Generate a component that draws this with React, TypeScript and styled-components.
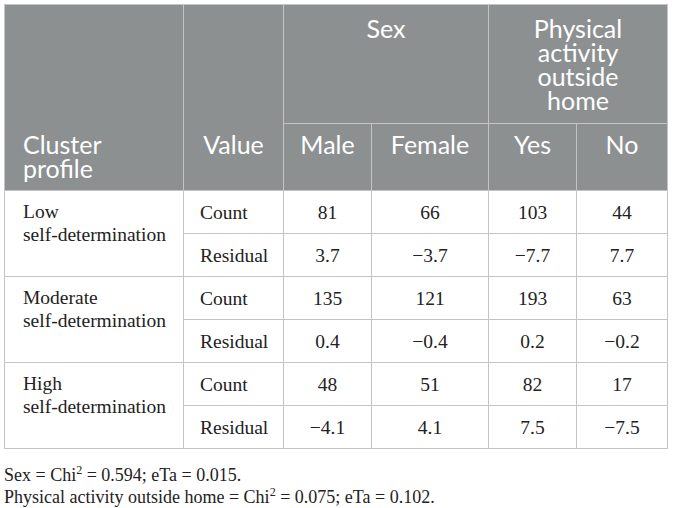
import { Fragment } from 'react';
import styled, { createGlobalStyle } from 'styled-components';

const GlobalStyle = createGlobalStyle`
  body {
    margin: 4px;
    background: #fff;
  }
`;

const Table = styled.table`
  width: 663px;
  border-collapse: collapse;
  table-layout: fixed;
  border: 1px solid #c4c4c4;
`;

const HeadCell = styled.th<{ $align?: 'left' | 'center'; $valign?: 'top' | 'bottom'; $pb?: number }>`
  background: #8c9091;
  color: #fff;
  font-family: Lato, "Open Sans", sans-serif;
  font-weight: 400;
  font-size: 25px;
  line-height: 24px;
  text-align: ${({ $align }) => $align || 'center'};
  vertical-align: ${({ $valign }) => $valign || 'top'};
  border: 1px solid #c4c4c4;
  padding: ${({ $valign, $pb }) => ($valign === 'bottom' ? `0 6px ${$pb ?? 10}px` : '11px 6px 0')};
  padding-left: ${({ $align }) => ($align === 'left' ? '18px' : '6px')};
`;

const SubHeadCell = styled(HeadCell)`
  padding-top: 8px;
`;

const TopRow = styled.tr`
  height: 119px;
`;

const SubRow = styled.tr`
  height: 67px;
`;

const BodyRow = styled.tr`
  height: 43px;
`;

const Cell = styled.td<{ $align?: 'left' | 'center' }>`
  font-family: "Liberation Serif", "Times New Roman", serif;
  font-size: 19.5px;
  line-height: 23px;
  color: #222;
  border: 1px solid #c4c4c4;
  text-align: ${({ $align }) => $align || 'center'};
  vertical-align: middle;
  padding: ${({ $align }) => ($align === 'left' ? '0 6px 0 16px' : '0 6px')};
`;

const GroupCell = styled(Cell)`
  vertical-align: top;
  text-align: left;
  padding: 9px 6px 0 18px;
`;

const Notes = styled.div`
  margin-top: 15px;
  font-family: "Liberation Serif", "Times New Roman", serif;
  font-size: 18px;
  line-height: 22px;
  color: #222;
`;

const Sup = styled.sup`
  font-size: 12px;
  line-height: 0;
`;

const groups = [
  { name: 'Low', count: ['81', '66', '103', '44'], residual: ['3.7', '−3.7', '−7.7', '7.7'] },
  { name: 'Moderate', count: ['135', '121', '193', '63'], residual: ['0.4', '−0.4', '0.2', '−0.2'] },
  { name: 'High', count: ['48', '51', '82', '17'], residual: ['−4.1', '4.1', '7.5', '−7.5'] },
];

export default function App() {
  return (
    <>
      <GlobalStyle />
      <Table>
        <colgroup>
          <col style={{ width: 179 }} />
          <col style={{ width: 100 }} />
          <col style={{ width: 88 }} />
          <col style={{ width: 117 }} />
          <col style={{ width: 88 }} />
          <col style={{ width: 91 }} />
        </colgroup>
        <thead>
          <TopRow>
            <HeadCell rowSpan={2} $align="left" $valign="bottom">
              Cluster
              <br />
              profile
            </HeadCell>
            <HeadCell rowSpan={2} $valign="bottom" $pb={34}>Value</HeadCell>
            <HeadCell colSpan={2}>Sex</HeadCell>
            <HeadCell colSpan={2}>
              Physical
              <br />
              activity
              <br />
              outside
              <br />
              home
            </HeadCell>
          </TopRow>
          <SubRow>
            <SubHeadCell>Male</SubHeadCell>
            <SubHeadCell>Female</SubHeadCell>
            <SubHeadCell>Yes</SubHeadCell>
            <SubHeadCell>No</SubHeadCell>
          </SubRow>
        </thead>
        <tbody>
          {groups.map((g) => (
            <Fragment key={g.name}>
              <BodyRow>
                <GroupCell rowSpan={2}>
                  {g.name}
                  <br />
                  self-determination
                </GroupCell>
                <Cell $align="left">Count</Cell>
                {g.count.map((v, i) => (
                  <Cell key={i}>{v}</Cell>
                ))}
              </BodyRow>
              <BodyRow>
                <Cell $align="left">Residual</Cell>
                {g.residual.map((v, i) => (
                  <Cell key={i}>{v}</Cell>
                ))}
              </BodyRow>
            </Fragment>
          ))}
        </tbody>
      </Table>
      <Notes>
        Sex = Chi<Sup>2</Sup> = 0.594; eTa = 0.015.
        <br />
        Physical activity outside home = Chi<Sup>2</Sup> = 0.075; eTa = 0.102.
      </Notes>
    </>
  );
}
